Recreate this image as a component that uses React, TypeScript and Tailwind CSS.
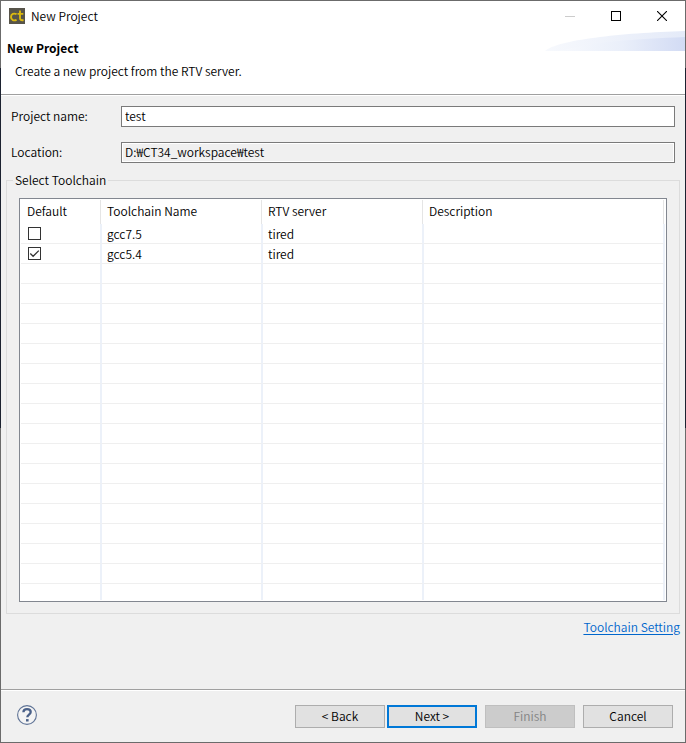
import { useState } from "react";

type Toolchain = {
  name: string;
  server: string;
  description: string;
};

const toolchains: Toolchain[] = [
  { name: "gcc7.5", server: "tired", description: "" },
  { name: "gcc5.4", server: "tired", description: "" },
];

const EMPTY_ROWS = 16;

const columns = ["Default", "Toolchain Name", "RTV server", "Description"];

const cell = "h-5 border-r-2 border-b border-r-[#ecf1f9] border-b-[#efefef] p-0 pl-[5px] leading-4";
const input = "h-[21px] w-full border border-[#7a7a7a] px-[3px] pb-[2px]";
const button = "h-[23px] w-[90px] pb-[2px]";

function AppIcon() {
  return (
    <svg width="16" height="16" viewBox="0 0 16 16">
      <path d="M0 0h16v16H0z" fill="#57544a" />
      <path d="M7.6 6.2C5 5 2 5.9 2 9s3 4 5.6 2.8" fill="none" stroke="#dcb90f" strokeWidth="1.9" />
      <path d="M11 2.5V10c0 2 1.2 2.5 3.5 2M8.5 5.9h5.8" fill="none" stroke="#dcb90f" strokeWidth="1.9" />
    </svg>
  );
}

function TitleBar() {
  return (
    <div className="flex h-[30px] items-center pl-2">
      <AppIcon />
      <span className="ml-[6px] flex-1">New Project</span>
      <button aria-label="Minimize" disabled className="flex h-full w-[46px] items-center justify-center">
        <svg width="10" height="11" viewBox="0 0 10 11" shapeRendering="crispEdges">
          <path d="M0 5.5h10" stroke="#cccccc" />
        </svg>
      </button>
      <button aria-label="Maximize" className="flex h-full w-[46px] items-center justify-center">
        <svg width="10" height="10" viewBox="0 0 10 10" shapeRendering="crispEdges">
          <path d="M.5 .5h9v9h-9z" fill="none" stroke="#000" />
        </svg>
      </button>
      <button aria-label="Close" className="flex h-full w-[46px] items-center justify-center">
        <svg width="10" height="10" viewBox="0 0 10 10">
          <path d="M0 0l10 10M10 0L0 10" stroke="#000" strokeWidth="1.1" />
        </svg>
      </button>
    </div>
  );
}

function Header() {
  return (
    <div className="relative h-16 border-b border-[#a0a0a0] px-[6px] pt-2">
      <svg className="absolute top-0 right-0" width="140" height="20" viewBox="0 0 140 20">
        <defs>
          <linearGradient id="outer">
            <stop offset="0" stopColor="#f7f9fd" />
            <stop offset="1" stopColor="#e4eaf8" />
          </linearGradient>
          <linearGradient id="inner">
            <stop offset="0" stopColor="#f7f9fd" />
            <stop offset=".5" stopColor="#eaeffa" />
            <stop offset="1" stopColor="#d2dbf4" />
          </linearGradient>
        </defs>
        <path d="M0 20C12 9 75 2 140 0v20z" fill="url(#outer)" />
        <path d="M14 20C45 11 90 8 140 6v14z" fill="url(#inner)" />
      </svg>
      <h1 className="font-bold">New Project</h1>
      <p className="mt-[5px] pl-2">Create a new project from the RTV server.</p>
    </div>
  );
}

function HelpIcon() {
  return (
    <svg width="20" height="20" viewBox="0 0 20 20">
      <circle cx="10" cy="10" r="9.4" fill="#f4f4f4" stroke="#5f7396" strokeWidth="1.1" />
      <path d="M6.4 7.2C6.5 5.1 7.900 4.200 10 4.200s3.700 1.100 3.700 2.900c0 2.400-3.400 2.600-3.400 5.100" fill="none" stroke="#4b6189" strokeWidth="2.300" />
      <path d="M9 14.1h2.600v2.400H9z" fill="#4b6189" />
    </svg>
  );
}

export default function App() {
  const [projectName, setProjectName] = useState("test");
  const [selected, setSelected] = useState(1);

  return (
    <div className="min-h-screen bg-[linear-gradient(#6b6b6b_68px,#1c2230_68px,#1c2230_428px,#6b6b6b_428px)] p-px">
      <div className="flex min-h-[calc(100vh-2px)] flex-col bg-[#f0f0f0] font-['Noto_Sans_CJK_KR',sans-serif] text-[12px] leading-[18px] font-[350] text-black">
        <div className="bg-white">
          <TitleBar />
          <Header />
        </div>

        <main className="flex-1 border-t border-white px-[5px] pt-[10px]">
          <div className="grid grid-cols-[110px_1fr] items-center gap-y-[15px] px-[5px]">
            <label htmlFor="project-name" className="pb-[2px]">
              Project name:
            </label>
            <input
              id="project-name"
              value={projectName}
              onChange={(e) => setProjectName(e.target.value)}
              className={`bg-white ${input}`}
            />
            <label htmlFor="location" className="pb-[2px]">
              Location:
            </label>
            <input
              id="location"
              readOnly
              value={`D:₩CT34_workspace₩${projectName}`}
              className={`bg-[#f0f0f0] inset-ring inset-ring-white ${input}`}
            />
          </div>

          <fieldset className="mt-2 border border-[#dcdcdc] px-3 pt-[9px] pb-[11px]">
            <legend className="-ml-[6px] px-[2px]">Select Toolchain</legend>
            <div className="border border-[#828790] bg-white p-px">
              <table className="w-full table-fixed border-separate border-spacing-0 text-left">
                <colgroup>
                  <col className="w-[81px]" />
                  <col className="w-[161px]" />
                  <col className="w-[161px]" />
                  <col />
                </colgroup>
                <thead>
                  <tr>
                    {columns.map((column) => (
                      <th key={column} className="group p-0 pr-px font-[350]">
                        <div className="h-6 border-r border-[#e5e5e5] pt-[2px] pl-[5px] group-first:pl-[6px]">{column}</div>
                      </th>
                    ))}
                  </tr>
                </thead>
                <tbody>
                  {toolchains.map((toolchain, index) => (
                    <tr key={toolchain.name}>
                      <td className={cell}>
                        <span className="relative ml-[2px] block h-[13px] w-[13px]">
                          <input
                            type="checkbox"
                            aria-label={`Default ${toolchain.name}`}
                            checked={selected === index}
                            onChange={() => setSelected(index)}
                            className="peer block h-[13px] w-[13px] appearance-none border border-[#333333] bg-white"
                          />
                          <svg
                            className="pointer-events-none absolute inset-0 hidden peer-checked:block"
                            width="13"
                            height="13"
                            viewBox="0 0 13 13"
                          >
                            <path d="M2.3 6.5l2.8 2.8 5.7-5.7" fill="none" stroke="#333333" strokeWidth="1.3" />
                          </svg>
                        </span>
                      </td>
                      <td className={cell}>{toolchain.name}</td>
                      <td className={cell}>{toolchain.server}</td>
                      <td className={cell}>{toolchain.description}</td>
                    </tr>
                  ))}
                  {Array.from({ length: EMPTY_ROWS }, (_, index) => (
                    <tr key={index}>
                      {columns.map((column) => (
                        <td key={column} className={cell}></td>
                      ))}
                    </tr>
                  ))}
                  <tr>
                    {columns.map((column) => (
                      <td key={column} className="h-4 border-r-2 border-[#ecf1f9] p-0"></td>
                    ))}
                  </tr>
                </tbody>
              </table>
            </div>
          </fieldset>

          <div className="mt-1 flex justify-end">
            <a href="#" className="text-[#0066cc] underline underline-offset-2">
              Toolchain Setting
            </a>
          </div>
        </main>

        <footer className="border-t border-[#a0a0a0]">
          <div className="flex h-[52px] items-start border-t border-white pt-[14px] pr-3 pl-4">
            <button aria-label="Help" className="mr-auto">
              <HelpIcon />
            </button>
            <button className={`border border-[#adadad] bg-[#e1e1e1] ${button}`}>&lt; Back</button>
            <button className={`ml-[2px] border-2 border-[#0078d7] bg-[#e1e1e1] ${button}`}>Next &gt;</button>
            <button disabled className={`ml-2 border border-[#bfbfbf] bg-[#cccccc] text-[#838383] ${button}`}>
              Finish
            </button>
            <button className={`ml-2 border border-[#adadad] bg-[#e1e1e1] ${button}`}>Cancel</button>
          </div>
        </footer>
      </div>
    </div>
  );
}
